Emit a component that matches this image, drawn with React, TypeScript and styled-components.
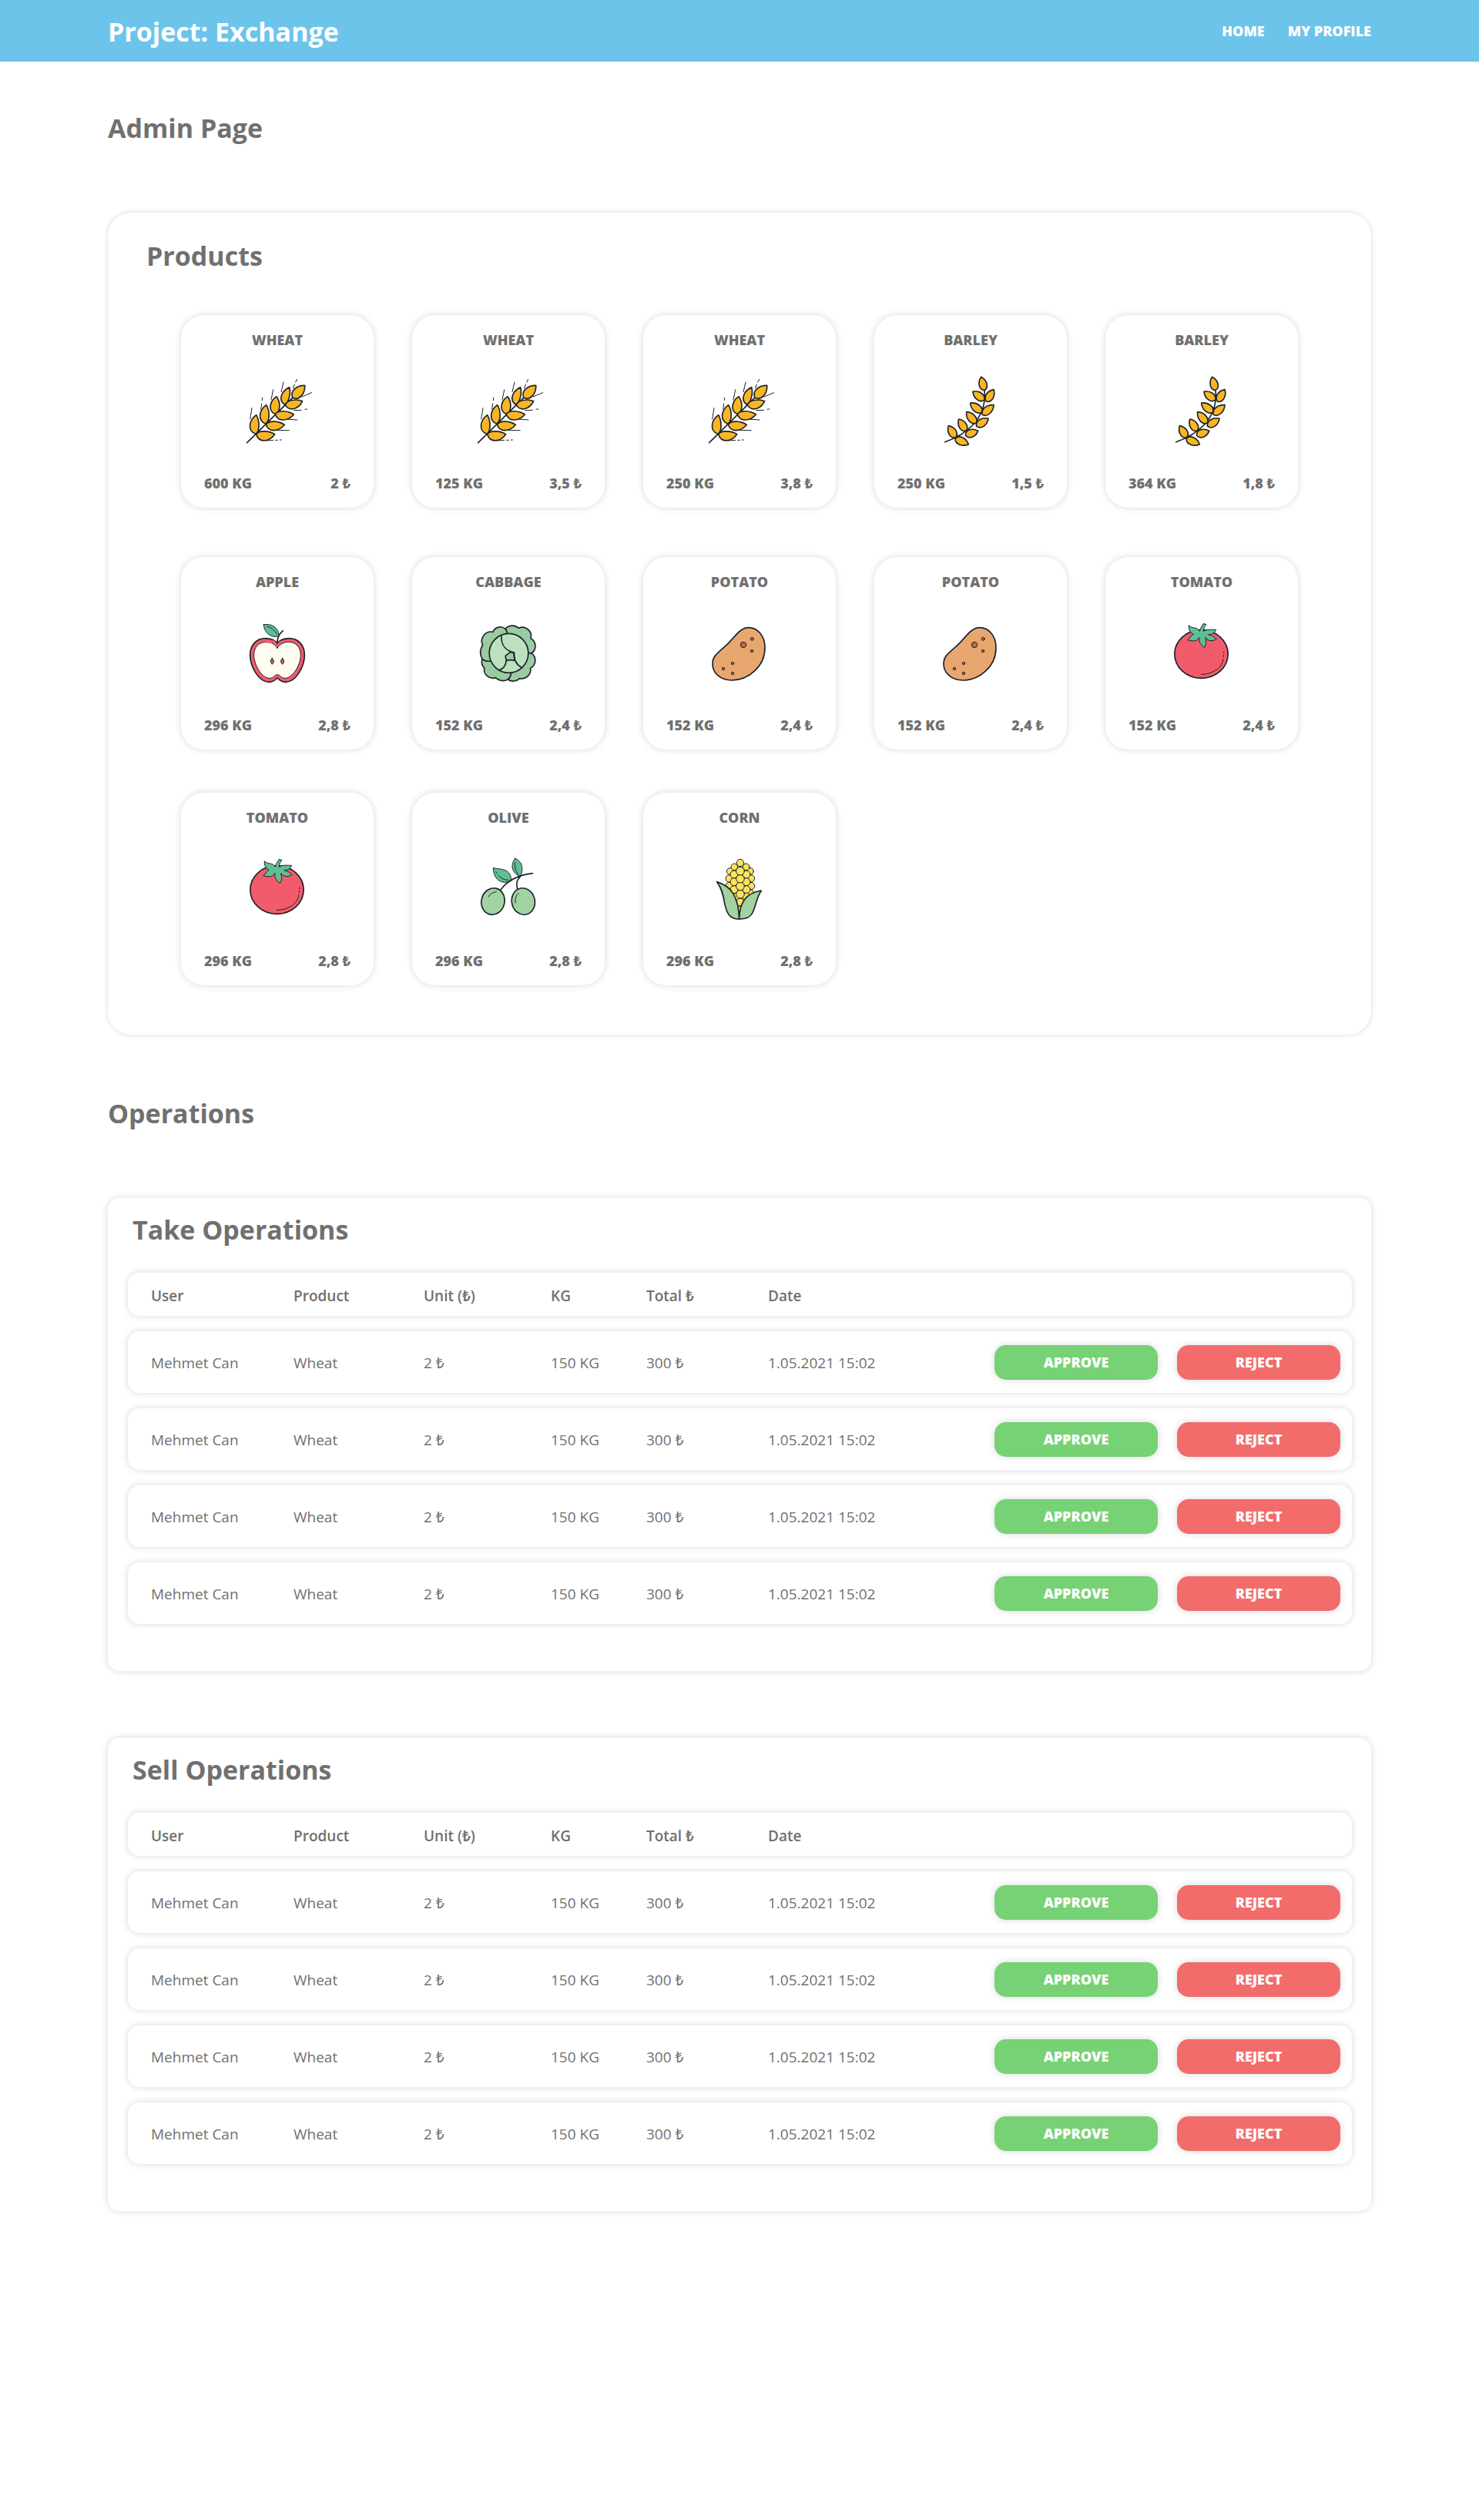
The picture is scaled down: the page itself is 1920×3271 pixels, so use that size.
import React from "react";
import styled, { createGlobalStyle } from "styled-components";

const GlobalStyle = createGlobalStyle`
  *, *::before, *::after { box-sizing: border-box; }
  body {
    margin: 0;
    background: #fff;
    color: #707070;
    font-family: "Segoe UI", "Open Sans", "Noto Sans", sans-serif;
    font-size: 18px;
    line-height: 24px;
  }
`;

const INK = "#1f212b";

/* ---------- layout ---------- */

const Header = styled.header`
  display: flex;
  align-items: center;
  justify-content: space-between;
  min-height: 80px;
  padding: 0 140px;
  background: #6dc4eb;
  color: #fff;
`;

const Brand = styled.a`
  padding-top: 2px;
  color: inherit;
  text-decoration: none;
  font-size: 34px;
  font-weight: 700;
  line-height: 46px;
`;

const Nav = styled.nav`
  display: flex;
  gap: 30px;
`;

const NavLink = styled.a`
  color: inherit;
  text-decoration: none;
  font-weight: 800;
`;

const Main = styled.main`
  padding: 61px 140px 401px;
`;

const Title = styled.h1`
  margin: 0;
  padding-top: 2px;
  font-size: 34px;
  font-weight: 700;
  line-height: 46px;
`;

const ProductPanel = styled.section`
  margin: 87px 0 77px;
  padding: 31px 50px 64px;
  border-radius: 30px;
  box-shadow: 0 0 6px rgba(0, 0, 0, 0.16);
`;

const ProductGrid = styled.ul`
  display: grid;
  grid-template-columns: repeat(auto-fill, 250px);
  grid-template-rows: 258px;
  grid-auto-rows: 250px;
  gap: 56px 50px;
  margin: 54px 45px 0;
  padding: 0;
  list-style: none;
`;

const Card = styled.li`
  display: flex;
  flex-direction: column;
  align-items: center;
  justify-content: space-between;
  height: 250px;
  padding: 20px 30px;
  border-radius: 30px;
  box-shadow: 0 0 10px rgba(0, 0, 0, 0.16);
  font-weight: 800;
`;

const CardName = styled.h3`
  margin: 0;
  font-size: 18px;
  font-weight: 800;
  line-height: 24px;
`;

const CardFooter = styled.div`
  display: flex;
  justify-content: space-between;
  align-self: stretch;
`;

const Picture = styled.svg`
  width: 100px;
  height: 100px;
  stroke: ${INK};
  stroke-width: 5;
  stroke-linecap: round;
  stroke-linejoin: round;
  fill: none;
`;

const OperationPanel = styled.section`
  margin-top: 87px;
  padding: 16px 25px 61px 26px;
  border-radius: 15px;
  box-shadow: 0 0 10px rgba(0, 0, 0, 0.16);
`;

const PanelTitle = styled(Title)`
  padding-left: 6px;
`;

const OperationTable = styled.table`
  display: block;
  margin-top: 33px;
  font-size: 19px;
`;

const RowGroup = styled.tbody`
  display: grid;
  gap: 20px;
  margin-top: 20px;
`;

const HeadGroup = styled.thead`
  display: block;
`;

const Row = styled.tr<{ $head?: boolean }>`
  display: grid;
  grid-template-columns: 185fr 169fr 165fr 124fr 158fr 743fr;
  align-items: center;
  min-height: ${(p) => (p.$head ? 56 : 80)}px;
  padding: 0 15px 0 30px;
  border-radius: 15px;
  box-shadow: 0 0 10px rgba(0, 0, 0, 0.16);
`;

const HeadCell = styled.th`
  padding: 4px 0 0;
  font-weight: 600;
  text-align: left;
`;

const Cell = styled.td`
  padding: 2px 0 0;
`;

const LastCell = styled.td`
  display: flex;
  align-items: center;
  justify-content: space-between;
  flex-wrap: wrap;
  padding: 0;
`;

const DateText = styled.time`
  padding-top: 2px;
`;

const Actions = styled.span`
  display: flex;
  gap: 25px;
`;

const ActionButton = styled.button<{ $color: string }>`
  width: 212px;
  height: 45px;
  padding: 0;
  border: 0;
  border-radius: 15px;
  background: ${(p) => p.$color};
  box-shadow: 0 0 10px rgba(0, 0, 0, 0.16);
  color: #fff;
  font: inherit;
  font-size: 18px;
  font-weight: 800;
  cursor: pointer;
`;

/* ---------- drawings ---------- */

type GrainProps = { from: [number, number]; to: [number, number]; left: number; right: number };

/* A teardrop grain with its tip at `from` and its rounded end at `to`. */
function Grain({ from, to, left, right }: GrainProps) {
  const dx = to[0] - from[0];
  const dy = to[1] - from[1];
  const len = Math.hypot(dx, dy);
  const nx = -dy / len;
  const ny = dx / len;
  const at = (t: number, w: number) => `${from[0] + dx * t + nx * w} ${from[1] + dy * t + ny * w}`;
  const d = `M${at(0, 0)} C${at(0.3, left * 1.15)} ${at(0.85, left * 1.35)} ${at(1, 0)} C${at(0.85, -right * 1.35)} ${at(0.3, -right * 1.15)} ${at(0, 0)} Z`;
  return <path d={d} fill="#f9b623" />;
}

/* Tip x, tip y, base x, base y, bulge on each side. */
const wheatGrains: [number, number, number, number, number, number][] = [
  [68, 164, 66, 238, 25, 12],
  [107, 125, 104, 198, 24, 13],
  [147, 92, 141, 160, 22, 16],
  [197, 56, 178, 123, 22, 11],
  [257, 49, 210, 97, 20, 20],
  [140, 239, 68, 239, 12, 26],
  [178, 202, 106, 201, 13, 24],
  [214, 162, 142, 161, 13, 23],
  [248, 110, 181, 125, 13, 23],
];

function Wheat() {
  return (
    <Picture viewBox="0 0 300 300" aria-hidden="true">
      <path
        strokeWidth="3"
        d="M44 180L51 137M86 142L89 120M91 107L92 97M126 104L134 66M165 74L174 36M212 60L217 45M221 36L227 25M246 93L284 77M215 146L244 145M258 142L266 141M180 180L228 183M142 223L196 224M104 264L134 262M143 262L151 262M160 261L166 261"
      />
      <path d="M32 272L212 94" />
      {wheatGrains.map(([a, b, c, d, left, right]) => (
        <Grain key={`${a}-${b}`} from={[a, b]} to={[c, d]} left={left} right={right} />
      ))}
    </Picture>
  );
}

const barleyGrains: [number, number, number, number][] = [
  [191, 16, 204, 68],
  [159, 73, 203, 106],
  [240, 65, 212, 112],
  [149, 117, 194, 154],
  [240, 125, 196, 163],
  [134, 152, 171, 196],
  [219, 178, 173, 208],
  [104, 180, 132, 226],
  [179, 226, 130, 243],
  [64, 206, 92, 252],
  [142, 278, 90, 256],
];

function Barley() {
  return (
    <Picture viewBox="0 0 300 300" aria-hidden="true">
      <path d="M50 269C130 242 215 180 204 68" />
      {barleyGrains.map(([a, b, c, d]) => (
        <Grain key={`${a}-${b}`} from={[a, b]} to={[c, d]} left={16} right={16} />
      ))}
    </Picture>
  );
}

function Apple() {
  return (
    <Picture viewBox="0 0 300 300" aria-hidden="true">
      <path
        fill="#f25b6b"
        d="M150 112C140 98 122 92 104 92C68 92 44 118 44 156C44 200 76 262 118 262C134 262 142 254 150 246C158 254 166 262 182 262C224 262 256 200 256 156C256 118 232 92 196 92C178 92 160 98 150 112Z"
      />
      <path
        fill="#fffdf0"
        strokeWidth="3"
        d="M150 130C142 114 124 106 106 106C78 106 59 126 59 156C59 196 90 247 120 247C136 247 140 233 150 233C160 233 164 247 180 247C210 247 241 196 241 156C241 126 222 106 194 106C176 106 158 114 150 130Z"
      />
      <path stroke="#f25b6b" strokeWidth="7" d="M136 102L150 119L162 105M106 105L126 108" />
      <path d="M150 110C149 88 158 74 172 62" />
      <path fill="#5fbe94" strokeWidth="3" d="M97 38C128 34 156 48 156 84C124 90 98 70 97 38Z" />
      <path strokeWidth="3" d="M112 46C128 50 140 60 148 74" />
      <path
        fill="#b06f3b"
        strokeWidth="3"
        d="M130 169Q143 181 130 193Q118 181 130 169ZM170 169Q182 181 170 193Q157 181 170 169Z"
      />
    </Picture>
  );
}

function Cabbage() {
  return (
    <Picture viewBox="0 0 300 300" aria-hidden="true">
      <path
        fill="#9bcba0"
        d="M50 118A36 36 0 0 1 90 67A30 30 0 0 1 138 55A36 36 0 0 1 190 52A34 34 0 0 1 237 92A34 34 0 0 1 240 150A34 34 0 0 1 236 208A35 35 0 0 1 194 248A37 37 0 0 1 148 252A40 40 0 0 1 100 245A34 34 0 0 1 56 207A35 35 0 0 1 48 172A52 52 0 0 1 50 118Z"
      />
      <path d="M138 55Q144 60 145 73M228 148L240 150M48 172Q60 183 80 180M161 228Q158 244 148 252" />
      <ellipse cx="151.5" cy="149.5" rx="76" ry="76.5" fill="#bce2c0" />
      <path fill="#9bcba0" d="M158 145L172 148L174 178Q157 174 142 178L138 160Z" />
      <path d="M123 80C120 120 142 141 172 147C170 175 182 195 203 206M142 178C140 195 130 210 115 215" />
    </Picture>
  );
}

function Potato() {
  return (
    <Picture viewBox="0 0 300 300" aria-hidden="true">
      <path
        fill="#e8a76f"
        d="M185 50C220 50 249 81 249 128C249 201 185 255 120 255C75 255 45 226 45 191C45 161 65 148 95 122C130 91 150 50 185 50Z"
      />
      <g fill="#b06f3b" strokeWidth="3">
        <circle cx="165" cy="117" r="11" />
        <circle cx="199" cy="94" r="6" />
        <circle cx="198" cy="141" r="5" />
        <circle cx="123" cy="189" r="5" />
        <circle cx="87" cy="210" r="5" />
        <circle cx="123" cy="228" r="5" />
      </g>
    </Picture>
  );
}

function Tomato() {
  return (
    <Picture viewBox="0 0 300 300" aria-hidden="true">
      <ellipse cx="148.5" cy="153" rx="104" ry="94" fill="#f25b6b" />
      <path strokeWidth="3" d="M148 232C195 232 232 204 234 172M235 163V157M236 149V144" />
      <path
        fill="#5fbe94"
        strokeWidth="3"
        d="M157 35L168 37C160 46 157 54 157 64C170 55 188 58 206 58C200 71 190 78 176 77C188 79 198 86 208 94C196 102 176 106 164 88C168 104 168 116 161 127C148 120 138 108 141 88C134 102 118 105 95 98C105 94 104 80 118 76C108 72 98 60 100 41C110 54 134 46 142 64C146 52 150 42 157 35Z"
      />
    </Picture>
  );
}

function Olive() {
  return (
    <Picture viewBox="0 0 300 300" aria-hidden="true">
      <ellipse cx="90" cy="198" rx="45" ry="52" transform="rotate(14 90 198)" fill="#a2d3a3" />
      <ellipse cx="208" cy="198" rx="45" ry="52" transform="rotate(-12 208 198)" fill="#a2d3a3" />
      <path strokeWidth="3" d="M72 180Q82 162 103 161M177 204Q174 178 190 166" />
      <path fill="#5fbe94" strokeWidth="3" d="M91 68C125 74 160 70 161 118C120 136 92 110 91 68Z" />
      <path fill="#5fbe94" strokeWidth="3" d="M176 31C206 42 210 75 196 101C165 88 155 60 176 31Z" />
      <path strokeWidth="3" d="M102 83L105 88M111 97Q126 115 150 115M176 48Q172 72 188 94" />
      <path d="M119 154C145 118 190 95 244 89M185 148C180 130 184 112 196 102" />
    </Picture>
  );
}

const cornKernels: [number, number, number][] = [
  [113, 81, 13], [192, 81, 13], [110, 109, 14], [195, 109, 14], [110, 138, 14], [195, 138, 14], [192, 166, 14],
  [130, 64, 13], [176, 64, 13], [129, 93, 15], [177, 93, 15], [129, 122, 15], [177, 122, 15],
  [129, 152, 15], [177, 152, 15], [177, 180, 15], [140, 180, 15],
  [153, 230, 13], [153, 201, 15], [153, 170, 16], [153, 139, 16], [153, 110, 16], [153, 80, 16], [153, 48, 14],
];

function Corn() {
  return (
    <Picture viewBox="0 0 300 300" aria-hidden="true">
      <g fill="#fbe55c" strokeWidth="3">
        {cornKernels.map(([x, y, r]) => (
          <circle key={`${x}-${y}`} cx={x} cy={y} r={r} />
        ))}
      </g>
      <path fill="#a2d3a3" d="M62 122C115 138 146 175 149 267C112 267 100 245 92 205C86 170 80 145 62 122Z" />
      <path fill="#a2d3a3" d="M235 156C218 180 216 205 204 235C196 258 180 267 149 267C149 205 175 165 235 156Z" />
    </Picture>
  );
}

/* ---------- data ---------- */

const pictures = { Wheat, Barley, Apple, Cabbage, Potato, Tomato, Olive, Corn };

type Product = { name: keyof typeof pictures; kg: string; price: string };

const products: Product[] = [
  { name: "Wheat", kg: "600", price: "2" },
  { name: "Wheat", kg: "125", price: "3,5" },
  { name: "Wheat", kg: "250", price: "3,8" },
  { name: "Barley", kg: "250", price: "1,5" },
  { name: "Barley", kg: "364", price: "1,8" },
  { name: "Apple", kg: "296", price: "2,8" },
  { name: "Cabbage", kg: "152", price: "2,4" },
  { name: "Potato", kg: "152", price: "2,4" },
  { name: "Potato", kg: "152", price: "2,4" },
  { name: "Tomato", kg: "152", price: "2,4" },
  { name: "Tomato", kg: "296", price: "2,8" },
  { name: "Olive", kg: "296", price: "2,8" },
  { name: "Corn", kg: "296", price: "2,8" },
];

const operation = {
  user: "Mehmet Can",
  product: "Wheat",
  unit: "2 ₺",
  kg: "150 KG",
  total: "300 ₺",
  date: "1.05.2021 15:02",
};

const operations = [operation, operation, operation, operation];

/* ---------- page ---------- */

function Operations({ title }: { title: string }) {
  return (
    <OperationPanel>
      <PanelTitle as="h2">{title}</PanelTitle>
      <OperationTable>
        <HeadGroup>
          <Row $head>
            <HeadCell scope="col">User</HeadCell>
            <HeadCell scope="col">Product</HeadCell>
            <HeadCell scope="col">Unit (₺)</HeadCell>
            <HeadCell scope="col">KG</HeadCell>
            <HeadCell scope="col">Total ₺</HeadCell>
            <HeadCell scope="col">Date</HeadCell>
          </Row>
        </HeadGroup>
        <RowGroup>
          {operations.map((op, i) => (
            <Row key={i}>
              <Cell>{op.user}</Cell>
              <Cell>{op.product}</Cell>
              <Cell>{op.unit}</Cell>
              <Cell>{op.kg}</Cell>
              <Cell>{op.total}</Cell>
              <LastCell>
                <DateText>{op.date}</DateText>
                <Actions>
                  <ActionButton type="button" $color="#77d275">APPROVE</ActionButton>
                  <ActionButton type="button" $color="#f26c6c">REJECT</ActionButton>
                </Actions>
              </LastCell>
            </Row>
          ))}
        </RowGroup>
      </OperationTable>
    </OperationPanel>
  );
}

export default function App() {
  return (
    <>
      <GlobalStyle />
      <Header>
        <Brand href="#">Project: Exchange</Brand>
        <Nav>
          <NavLink href="#home">HOME</NavLink>
          <NavLink href="#profile">MY PROFILE</NavLink>
        </Nav>
      </Header>
      <Main>
        <Title>Admin Page</Title>
        <ProductPanel>
          <Title as="h2">Products</Title>
          <ProductGrid>
            {products.map((p, i) => {
              const Drawing = pictures[p.name];
              return (
                <Card key={i}>
                  <CardName>{p.name.toUpperCase()}</CardName>
                  <Drawing />
                  <CardFooter>
                    <span>{p.kg} KG</span>
                    <span>{p.price} ₺</span>
                  </CardFooter>
                </Card>
              );
            })}
          </ProductGrid>
        </ProductPanel>
        <Title as="h2">Operations</Title>
        <Operations title="Take Operations" />
        <Operations title="Sell Operations" />
      </Main>
    </>
  );
}
